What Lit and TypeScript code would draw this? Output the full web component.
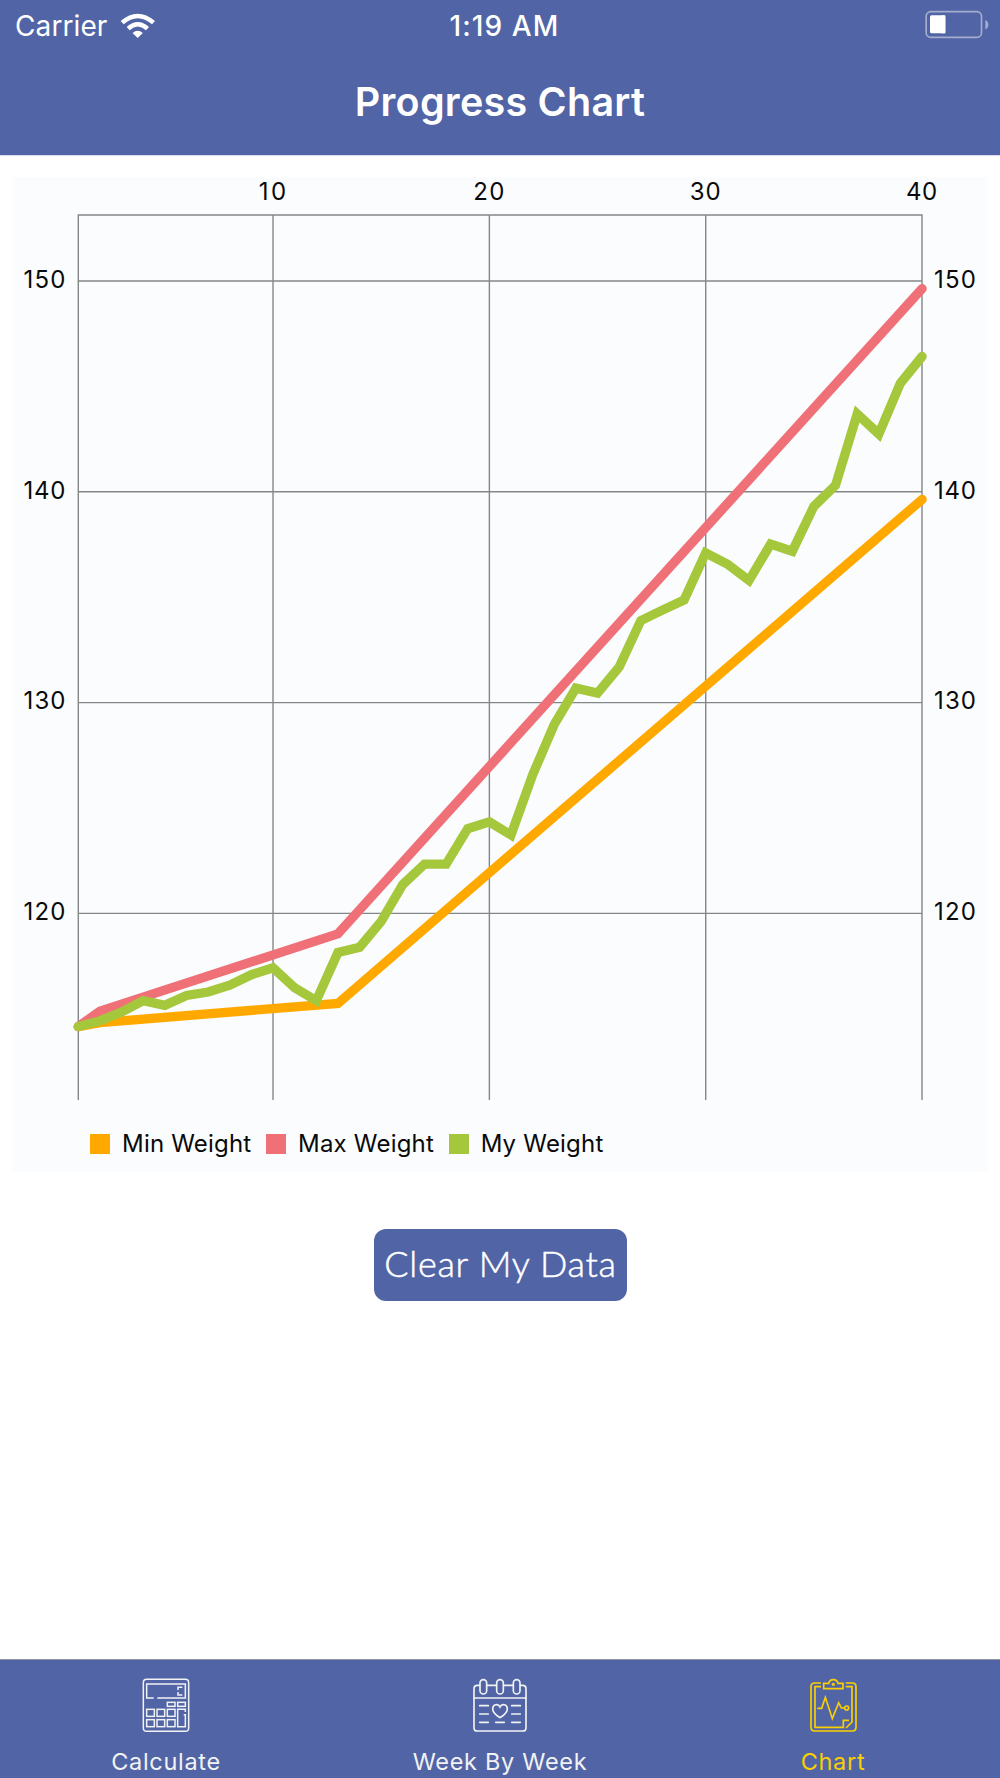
import { LitElement, html, svg, css } from "lit";
import { customElement, property } from "lit/decorators.js";

const FONT = css`"Inter", "Liberation Sans", sans-serif`;

@customElement("status-bar")
class StatusBar extends LitElement {
  static styles = css`
    :host {
      display: grid;
      grid-template-columns: 1fr auto 1fr;
      align-items: center;
      height: 50px;
      padding: 0 11px 0 15px;
      font-family: ${FONT};
      font-size: 28px;
      line-height: 50px;
      color: #fff;
    }
    .left {
      display: flex;
      align-items: center;
    }
    .carrier {
      padding-top: 1px;
      letter-spacing: 0.1px;
      width: 105px;
      white-space: nowrap;
    }
    .time {
      padding: 1px 0 0 5px;
      font-weight: 500;
      letter-spacing: 1.1px;
    }
    .right {
      display: flex;
      justify-content: flex-end;
      padding-bottom: 2px;
    }
    svg {
      display: block;
    }
  `;
  render() {
    return html`
      <div class="left">
        <span class="carrier">Carrier</span>
        <svg width="36" height="26" viewBox="360 34 108 78" fill="#fff">
          <path d="M413 109 L397.500 94 Q413 80 428.500 94Z" />
          <path d="M380 76 Q413 46 447 76 L438 85.500 Q413 64 389 85.500Z" />
          <path d="M362 58 Q413 14 465 58 L456 68 Q413 31 371 68Z" />
        </svg>
      </div>
      <span class="time">1:19 AM</span>
      <div class="right">
        <svg width="64" height="29" viewBox="194 29 192 87">
          <rect x="197.500" y="34" width="166" height="77" rx="14" fill="none" stroke="#a3add0" stroke-width="5" />
          <rect x="209" y="45" width="46" height="54" rx="5" fill="#fff" />
          <rect x="244" y="45" width="11" height="54" fill="#fff" />
          <path d="M375 59 Q384 63 384 73 Q384 83 375 87Z" fill="#a3add0" />
        </svg>
      </div>
    `;
  }
}

type Series = { name: string; color: string; points: [number, number][] };

const xAt = (week: number) => 78.3 + (week - 1) * 21.635;
const yAt = (weight: number) => 281 + (150 - weight) * 21.08;

const MY_WEIGHT = [
  114.63, 114.9, 115.32, 115.86, 115.64, 116.11, 116.27, 116.6, 117.09, 117.42,
  116.47, 115.86, 118.14, 118.39, 119.62, 121.37, 122.34, 122.34, 124.02, 124.34,
  123.72, 126.57, 128.97, 130.69, 130.45, 131.69, 133.89, 134.39, 134.87, 137.1,
  136.57, 135.79, 137.52, 137.18, 139.31, 140.31, 143.69, 142.74, 145.15, 146.42,
];

const SERIES: Series[] = [
  {
    name: "Min Weight",
    color: "#ffa900",
    points: [[1, 114.63], [2, 114.82], [13, 115.73], [40, 139.64]],
  },
  {
    name: "Max Weight",
    color: "#f07078",
    points: [[1, 114.63], [2, 115.36], [13, 119.03], [40, 149.64]],
  },
  {
    name: "My Weight",
    color: "#a5c73b",
    points: MY_WEIGHT.map((w, i): [number, number] => [i + 1, w]),
  },
];

@customElement("progress-chart")
class ProgressChart extends LitElement {
  static styles = css`
    :host {
      display: flex;
      flex-direction: column;
      height: 995px;
      background: #fafcfe;
      font-family: ${FONT};
      color: #0a0a0a;
    }
    svg {
      display: block;
      flex: none;
    }
    .grid {
      stroke: #858687;
      stroke-width: 1.4;
      fill: none;
    }
    .axis {
      font-size: 24px;
      fill: #0a0a0a;
    }
    .series {
      fill: none;
      stroke-width: 9.3;
      stroke-linecap: round;
      stroke-linejoin: miter;
    }
    .legend {
      display: flex;
      align-items: center;
      padding: 0 0 0 78px;
      height: 36px;
      font-size: 24px;
      line-height: 36px;
      white-space: nowrap;
    }
    .item {
      display: flex;
      align-items: center;
      gap: 12px;
      margin-right: 14.6px;
      letter-spacing: 0.2px;
    }
    .swatch {
      width: 20px;
      height: 20px;
    }
  `;
  render() {
    const weeks = [10, 20, 30, 40];
    const weights = [150, 140, 130, 120];
    return html`
      <svg width="976" height="949" viewBox="12 177 976 949">
        <path class="grid" d="M78.300 1100V215H922V1100" />
        ${weeks.map(
          (w) => svg`
            ${w < 40 ? svg`<path class="grid" d="M${xAt(w)} 215V1100" />` : null}
            <text class="axis" x=${xAt(w) - 0.5} y="200" text-anchor="middle" textLength=${w === 10 ? 27.5 : 31}>${w}</text>`
        )}
        ${weights.map(
          (w) => svg`
            <path class="grid" d="M78.300 ${yAt(w)}H922" />
            <text class="axis" x="65.500" y=${yAt(w) + 6.7} text-anchor="end" textLength="42">${w}</text>
            <text class="axis" x="934" y=${yAt(w) + 6.7} textLength="42">${w}</text>`
        )}
        ${SERIES.map(
          (s) => svg`<polyline class="series" stroke=${s.color}
            points=${s.points.map(([x, y]) => `${xAt(x).toFixed(1)},${yAt(y).toFixed(1)}`).join(" ")} />`
        )}
      </svg>
      <div class="legend">
        ${SERIES.map(
          (s) => html`<div class="item">
            <span class="swatch" style="background:${s.color}"></span><span>${s.name}</span>
          </div>`
        )}
      </div>
    `;
  }
}

const calculatorIcon = html`<svg width="48" height="55" viewBox="156 84 144 165" fill="none" stroke="currentColor" stroke-width="4.500">
  <rect x="160" y="88" width="136" height="156" rx="10" />
  <path d="M191 144H170V102H286V144H202" />
  <path d="M277 112H264V120M264 126V135H277" />
  <rect x="232" y="157" width="23" height="12" />
  <rect x="263" y="157" width="23" height="12" />
  <path d="M286 186V178H263V230H286V194H281" />
  <rect x="170" y="178" width="23" height="21" />
  <rect x="201" y="178" width="23" height="21" />
  <rect x="232" y="178" width="23" height="21" />
  <rect x="170" y="209" width="23" height="21" />
  <rect x="201" y="209" width="23" height="21" />
  <rect x="232" y="209" width="23" height="21" />
</svg>`;

const calendarIcon = html`<svg width="56" height="55" viewBox="216 84 168 165" fill="none" stroke="currentColor" stroke-width="5" stroke-linecap="round">
  <path d="M239 106H232Q222 106 222 116V233Q222 243 232 243H368Q378 243 378 233V116Q378 106 368 106H361M261 106H289M311 106H339" />
  <path d="M222 144H378" />
  <rect x="240" y="89" width="20" height="43" rx="10" />
  <rect x="290" y="89" width="20" height="43" rx="10" />
  <rect x="340" y="89" width="20" height="43" rx="10" />
  <path d="M300 203C291 197 278 190 278 177C278 162 295 160 300 171C305 160 322 162 322 177C322 190 309 197 300 203Z" />
  <path d="M239 167H265M239 192H265M239 217H265M335 167H361M335 192H361M335 217H361M287 217H313" />
</svg>`;

const clipboardIcon = html`<svg width="48" height="55" viewBox="87 84 144 165" fill="none" stroke="currentColor" stroke-width="5">
  <path d="M123 99H104Q93 99 93 110V232Q93 243 104 243H217Q228 243 228 232V110Q228 99 217 99H197" />
  <path d="M123 110H105V232H190V211H207M197 110H216V216L198 234" />
  <path d="M131 116V100H146Q149 89 160 89Q171 89 174 100H189V116Z" />
  <circle cx="160" cy="103" r="5" fill="currentColor" stroke="none" />
  <path d="M112 175H125L136 142L157 206L176 158L184 174H193" />
  <circle cx="200" cy="174" r="6" />
</svg>`;

@customElement("tab-item")
class TabItem extends LitElement {
  @property() label = "";
  @property({ attribute: false }) icon: unknown = null;
  static styles = css`
    :host {
      display: flex;
      flex-direction: column;
      align-items: center;
      padding-top: 18px;
      font-family: ${FONT};
    }
    .icon svg {
      display: block;
    }
    .label {
      margin-top: 13px;
      font-size: 23.5px;
      line-height: 32px;
      letter-spacing: 0.7px;
      white-space: nowrap;
    }
  `;
  render() {
    return html`<div class="icon">${this.icon}</div><div class="label">${this.label}</div>`;
  }
}

@customElement("app-root")
class AppRoot extends LitElement {
  static styles = css`
    :host {
      display: flex;
      flex-direction: column;
      width: 1000px;
      height: 1778px;
      background: #fff;
      font-family: ${FONT};
    }
    .header {
      flex: none;
      height: 155px;
      background: #5164a5;
      border-bottom: 1px solid #d9dceb;
    }
    .title {
      margin: 0;
      padding-top: 24px;
      font-size: 39.5px;
      line-height: 56px;
      font-weight: 600;
      letter-spacing: 0.25px;
      text-align: center;
      color: #fff;
    }
    .content {
      flex: 1;
      display: flex;
      flex-direction: column;
      align-items: center;
      padding: 21px 12px 0;
    }
    progress-chart {
      align-self: stretch;
    }
    .clear {
      margin: 57px 0 0 1px;
      width: 253px;
      height: 72px;
      padding: 0 0 4px;
      border: 0;
      border-radius: 12px;
      background: #5164a5;
      color: #fff;
      font-family: "Lato", "Open Sans", sans-serif;
      font-weight: 300;
      font-size: 36px;
      line-height: 68px;
      letter-spacing: 0.7px;
      -webkit-text-stroke: 0.5px #fff;
      white-space: nowrap;
    }
    .tabs {
      flex: none;
      display: grid;
      grid-template-columns: 332px 336px 332px;
      box-sizing: border-box;
      height: 119px;
      border-top: 1px solid #8e939f;
      background: #5164a5;
    }
    .tab {
      color: #f1f2f4;
    }
    .active {
      color: #fad000;
    }
    .tab:last-child {
      margin-right: 2px;
    }
  `;
  render() {
    return html`
      <div class="header">
        <status-bar></status-bar>
        <h1 class="title">Progress Chart</h1>
      </div>
      <div class="content">
        <progress-chart></progress-chart>
        <button class="clear">Clear My Data</button>
      </div>
      <div class="tabs">
        <tab-item class="tab" label="Calculate" .icon=${calculatorIcon}></tab-item>
        <tab-item class="tab" label="Week By Week" .icon=${calendarIcon}></tab-item>
        <tab-item class="tab active" label="Chart" .icon=${clipboardIcon}></tab-item>
      </div>
    `;
  }
}
